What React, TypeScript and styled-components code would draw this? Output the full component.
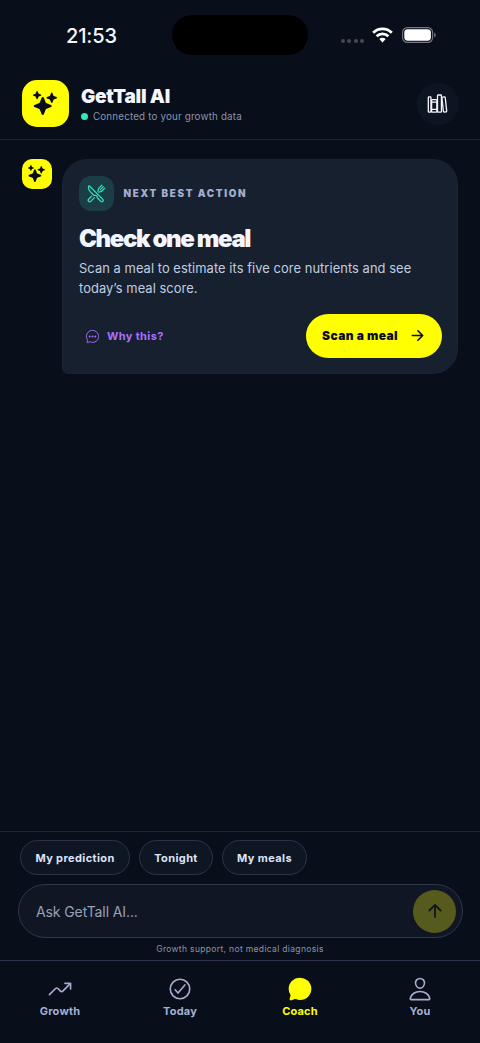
import React from "react";
import styled, { createGlobalStyle } from "styled-components";
import {
  IoSparkles,
  IoLibraryOutline,
  IoRestaurantOutline,
  IoChatbubbleEllipsesOutline,
  IoArrowForward,
  IoArrowUp,
  IoTrendingUpOutline,
  IoCheckmarkCircleOutline,
  IoChatbubble,
  IoPersonOutline,
} from "react-icons/io5";

const color = {
  bg: "#080e1a",
  card: "#16202f",
  yellow: "#ffff00",
  ink: "#0a0e1a",
  text: "#f4f6ff",
  soft: "#c0cde0",
  muted: "#a5aed0",
  dim: "#8c94ab",
  line: "#1f2535",
  mint: "#35e8bb",
  purple: "#a970ff",
};

const GlobalStyle = createGlobalStyle`
  *, *::before, *::after { box-sizing: border-box; }
  body { margin: 0; background: ${color.bg}; }
  button { font: inherit; border: 0; padding: 0; margin: 0; background: none; color: inherit; }
  svg { display: block; flex: none; }
`;

const Screen = styled.div`
  width: 480px;
  height: 1043px;
  display: flex;
  flex-direction: column;
  overflow: hidden;
  background: ${color.bg};
  color: ${color.text};
  font-family: Inter, "Liberation Sans", sans-serif;
  white-space: nowrap;
`;

const StatusBar = styled.div`
  height: 70px;
  flex: none;
  display: grid;
  grid-template-columns: 172px 136px 1fr;
  align-items: center;
`;

const Clock = styled.span`
  padding: 2px 0 0 66px;
  font-size: 20px;
  line-height: 24px;
  font-weight: 500;
  letter-spacing: -0.15px;
`;

const Island = styled.div`
  height: 40px;
  border-radius: 20px;
  background: #000;
`;

const StatusIcons = styled.div`
  display: flex;
  align-items: center;
  padding-left: 32.5px;
`;

const SignalDots = styled.div`
  display: flex;
  gap: 2.5px;
  margin: 11px 8px 0 0;
`;

const SignalDot = styled.i`
  width: 4px;
  height: 4px;
  border-radius: 50%;
  background: #454957;
`;

const Header = styled.header`
  height: 70px;
  flex: none;
  display: flex;
  align-items: center;
  padding: 0 21.5px 2px 22px;
  border-bottom: 1px solid ${color.line};
`;

const Avatar = styled.div<{ $size: number; $radius: number }>`
  width: ${(p) => p.$size}px;
  height: ${(p) => p.$size}px;
  border-radius: ${(p) => p.$radius}px;
  flex: none;
  display: grid;
  place-items: center;
  padding: 0 1px 1px 0;
  background: ${color.yellow};
  color: ${color.ink};
`;

const Identity = styled.div`
  flex: 1;
  padding-left: 12px;
`;

const Name = styled.h1`
  margin: 1px 0 0;
  font-size: 19px;
  line-height: 24px;
  font-weight: 900;
  letter-spacing: -0.25px;
`;

const Connection = styled.div`
  display: flex;
  align-items: center;
  gap: 5px;
  font-size: 9.8px;
  line-height: 14px;
  margin-top: 1px;
  letter-spacing: 0.17px;
  color: ${color.dim};
`;

const OnlineDot = styled.i`
  width: 7px;
  height: 7px;
  border-radius: 50%;
  background: ${color.mint};
`;

const LibraryButton = styled.button`
  width: 42px;
  height: 42px;
  border-radius: 50%;
  display: grid;
  place-items: center;
  padding-right: 1px;
  background: #0e1522;
  color: ${color.text};
`;

const Feed = styled.main`
  flex: 1;
  display: flex;
  align-items: flex-start;
  gap: 10px;
  padding: 19px 22px 0;
`;

const Card = styled.section`
  flex: 1;
  height: 215px;
  padding: 16px 15px 0 16px;
  border: 1px solid #1a2333;
  border-radius: 25px 25px 25px 6px;
  background: ${color.card};
`;

const Eyebrow = styled.div`
  display: flex;
  align-items: center;
  gap: 9.5px;
  font-size: 9.8px;
  font-weight: 900;
  letter-spacing: 1.7px;
  color: ${color.muted};
`;

const EyebrowIcon = styled.div`
  width: 35px;
  height: 35px;
  border-radius: 12px;
  display: grid;
  place-items: center;
  padding-right: 1px;
  background: #1b3d45;
  color: ${color.mint};
`;

const EyebrowText = styled.span`
  padding-bottom: 1px;
`;

const CardTitle = styled.h2`
  margin: 14px 0 0;
  font-size: 24px;
  line-height: 28px;
  font-weight: 900;
  letter-spacing: -1.4px;
`;

const CardText = styled.p`
  margin: 6px 0 0;
  font-size: 12.9px;
  line-height: 20px;
  letter-spacing: 0.06px;
  color: ${color.soft};
`;

const CardActions = styled.div`
  display: flex;
  align-items: center;
  justify-content: space-between;
  margin-top: 15px;
`;

const WhyButton = styled.button`
  display: flex;
  align-items: center;
  gap: 7px;
  padding-left: 6px;
  font-size: 11px;
  font-weight: 700;
  letter-spacing: 0.35px;
  color: ${color.purple};
`;

const ScanButton = styled.button`
  width: 136px;
  height: 44px;
  border-radius: 22px;
  display: flex;
  align-items: center;
  justify-content: space-between;
  padding: 0 16.5px 1px 16px;
  background: ${color.yellow};
  color: ${color.ink};
  font-size: 12px;
  font-weight: 900;
  letter-spacing: 0.4px;
`;

const Composer = styled.section`
  height: 129px;
  flex: none;
  display: flex;
  flex-direction: column;
  padding: 8px 17.5px 0;
  border-top: 1px solid ${color.line};
`;

const Chips = styled.div`
  display: flex;
  gap: 9px;
  padding-left: 2.5px;
`;

const Chip = styled.button<{ $width: number }>`
  width: ${(p) => p.$width}px;
  height: 35px;
  border: 1px solid #2b3447;
  border-radius: 18px;
  background: #0e1624;
  color: #dde4f8;
  font-size: 11px;
  font-weight: 700;
  letter-spacing: 0.38px;
`;

const InputBar = styled.div`
  height: 54px;
  margin-top: 9px;
  display: flex;
  align-items: center;
  justify-content: space-between;
  padding: 0 5.5px 0 17.5px;
  border: 1px solid #2d364b;
  border-radius: 27px;
  background: #101624;
  font-size: 14px;
  letter-spacing: -0.1px;
  color: #98a1b8;
`;

const SendButton = styled.button`
  width: 43px;
  height: 43px;
  border-radius: 50%;
  display: grid;
  place-items: center;
  background: #575a1d;
  color: #14171b;
`;

const Disclaimer = styled.small`
  margin-top: 5px;
  text-align: center;
  font-size: 8.5px;
  line-height: 12px;
  letter-spacing: 0.34px;
  color: ${color.dim};
`;

const TabBar = styled.nav`
  height: 83px;
  flex: none;
  display: grid;
  grid-template-columns: repeat(4, 1fr);
  border-top: 1px solid #2c3348;
`;

const Tab = styled.button<{ $active?: boolean }>`
  display: flex;
  flex-direction: column;
  align-items: center;
  padding-top: 15px;
  font-size: 11px;
  line-height: 14px;
  font-weight: 700;
  letter-spacing: 0.2px;
  color: ${(p) => (p.$active ? color.yellow : color.muted)};
`;

const TabLabel = styled.span`
  margin-top: 2px;
`;

const WifiIcon = () => (
  <svg width="21" height="16" viewBox="0 0 21 16" fill="none" stroke="#fff" strokeWidth="2.8">
    <path d="M1.2 5.7C6.3 .6 14.7 .6 19.8 5.7" />
    <path d="M4.6 9.2c3.3-3.2 8.5-3.2 11.8 0" />
    <path d="M7.3 12.1c1.8-1.7 4.6-1.7 6.4 0l-3.2 3.4z" fill="#fff" stroke="none" />
  </svg>
);

const BatterySvg = styled.svg`
  margin-left: 8.5px;
`;

const BatteryIcon = () => (
  <BatterySvg width="35" height="16" viewBox="0 0 35 16">
    <rect x=".6" y=".6" width="30" height="14.8" rx="4.8" fill="none" stroke="#757985" strokeWidth="1.1" />
    <rect x="2.3" y="2.3" width="26.6" height="11.4" rx="3.4" fill="#fff" />
    <path d="M32.2 5.5c2 .8 2 4.2 0 5z" fill="#757985" />
  </BatterySvg>
);

const tabs = [
  { label: "Growth", Icon: IoTrendingUpOutline },
  { label: "Today", Icon: IoCheckmarkCircleOutline },
  { label: "Coach", Icon: IoChatbubble, active: true },
  { label: "You", Icon: IoPersonOutline },
];

const chips = [
  { label: "My prediction", width: 110 },
  { label: "Tonight", width: 74 },
  { label: "My meals", width: 85 },
];

export default function App() {
  return (
    <>
      <GlobalStyle />
      <Screen>
        <StatusBar>
          <Clock>21:53</Clock>
          <Island />
          <StatusIcons>
            <SignalDots>
              <SignalDot />
              <SignalDot />
              <SignalDot />
              <SignalDot />
            </SignalDots>
            <WifiIcon />
            <BatteryIcon />
          </StatusIcons>
        </StatusBar>
        <Header>
          <Avatar $size={47} $radius={15}>
            <IoSparkles size={24} />
          </Avatar>
          <Identity>
            <Name>GetTall AI</Name>
            <Connection>
              <OnlineDot />
              Connected to your growth data
            </Connection>
          </Identity>
          <LibraryButton aria-label="Library">
            <IoLibraryOutline size={21} />
          </LibraryButton>
        </Header>
        <Feed>
          <Avatar $size={30} $radius={10}>
            <IoSparkles size={17} />
          </Avatar>
          <Card>
            <Eyebrow>
              <EyebrowIcon>
                <IoRestaurantOutline size={19} />
              </EyebrowIcon>
              <EyebrowText>NEXT BEST ACTION</EyebrowText>
            </Eyebrow>
            <CardTitle>Check one meal</CardTitle>
            <CardText>
              Scan a meal to estimate its five core nutrients and see
              <br />
              today’s meal score.
            </CardText>
            <CardActions>
              <WhyButton>
                <IoChatbubbleEllipsesOutline size={15} />
                Why this?
              </WhyButton>
              <ScanButton>
                Scan a meal
                <IoArrowForward size={17} />
              </ScanButton>
            </CardActions>
          </Card>
        </Feed>
        <Composer>
          <Chips>
            {chips.map((c) => (
              <Chip key={c.label} $width={c.width}>
                {c.label}
              </Chip>
            ))}
          </Chips>
          <InputBar>
            Ask GetTall AI...
            <SendButton aria-label="Send">
              <IoArrowUp size={20} />
            </SendButton>
          </InputBar>
          <Disclaimer>Growth support, not medical diagnosis</Disclaimer>
        </Composer>
        <TabBar>
          {tabs.map(({ label, Icon, active }) => (
            <Tab key={label} $active={active}>
              <Icon size={26} />
              <TabLabel>{label}</TabLabel>
            </Tab>
          ))}
        </TabBar>
      </Screen>
    </>
  );
}
